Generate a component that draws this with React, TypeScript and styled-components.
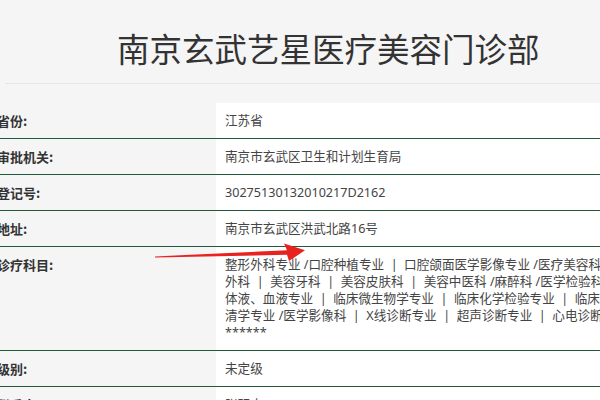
import React from "react";
import styled, { createGlobalStyle } from "styled-components";

const Global = createGlobalStyle`
  html, body { margin: 0; padding: 0; background: #f5f5f5; overflow: hidden; }
  body { font-family: "Noto Sans", "Noto Sans CJK SC", sans-serif; color: #333; }
`;

const Page = styled.div`
  position: relative;
  width: 600px;
  height: 400px;
  overflow: hidden;
  background: #f5f5f5;
`;

const Header = styled.header`
  margin-left: 5px;
  padding: 26px 0 13px 112px;
  border-bottom: 1px solid #e6e6e6;
`;

const Title = styled.h1`
  margin: 0;
  font-family: "Noto Sans CJK SC", sans-serif;
  font-weight: 400;
  font-size: 32.5px;
  line-height: 44px;
  color: #333;
  white-space: nowrap;
`;

const Table = styled.div`
  margin: 19px 0 0 -12px;
  width: 760px;
  display: flex;
  flex-direction: column;
`;

const Row = styled.div<{ $last?: boolean }>`
  display: grid;
  grid-template-columns: 228px 1fr;
  border-bottom: ${(p) => (p.$last ? "none" : "1px solid #1f5a3a")};
`;

const Label = styled.div`
  padding: 9px 0 9px 9px;
  font-family: "Noto Sans CJK SC", sans-serif;
  font-weight: 700;
  font-size: 13px;
  line-height: 17px;
  color: #333;
  background: #f5f5f5;
`;

const Value = styled.div`
  padding: 9px 0 9px 9px;
  font-family: "Noto Sans", "Noto Sans CJK SC", sans-serif;
  font-size: 12.6px;
  line-height: 17px;
  color: #444;
  background: #fff;
`;

const Line = styled.div`
  white-space: nowrap;
`;

const Arrow = styled.svg`
  position: absolute;
  left: 0;
  top: 0;
  pointer-events: none;
`;

const sep = "\u00a0\u00a0|\u00a0\u00a0";

const scopeLines = [
  `整形外科专业 /口腔种植专业${sep}口腔颌面医学影像专业 /医疗美容科 /美容`,
  `外科${sep}美容牙科${sep}美容皮肤科${sep}美容中医科 /麻醉科 /医学检验科 /临床`,
  `体液、血液专业${sep}临床微生物学专业${sep}临床化学检验专业${sep}临床免疫、血`,
  `清学专业 /医学影像科${sep}X线诊断专业${sep}超声诊断专业${sep}心电诊断专业`,
  "******",
];

const rows: { label: string; value: React.ReactNode }[] = [
  { label: "省份:", value: "江苏省" },
  { label: "审批机关:", value: "南京市玄武区卫生和计划生育局" },
  { label: "登记号:", value: "30275130132010217D2162" },
  { label: "地址:", value: "南京市玄武区洪武北路16号" },
  {
    label: "诊疗科目:",
    value: scopeLines.map((l, i) => <Line key={i}>{l}</Line>),
  },
  { label: "级别:", value: "未定级" },
  { label: "联系人:", value: "张明小" },
];

export default function App() {
  return (
    <Page>
      <Global />
      <Header>
        <Title>南京玄武艺星医疗美容门诊部</Title>
      </Header>
      <Table>
        {rows.map((r, i) => (
          <Row key={i} $last={i === rows.length - 1}>
            <Label>{r.label}</Label>
            <Value>{r.value}</Value>
          </Row>
        ))}
      </Table>
      <Arrow width="600" height="400" viewBox="0 0 600 400">
        <polygon
          points="155,256.4 287,250.2 284,243.5 305,250.3 289,261 287,254.8 155,257.4"
          fill="#e8231f"
        />
      </Arrow>
    </Page>
  );
}
